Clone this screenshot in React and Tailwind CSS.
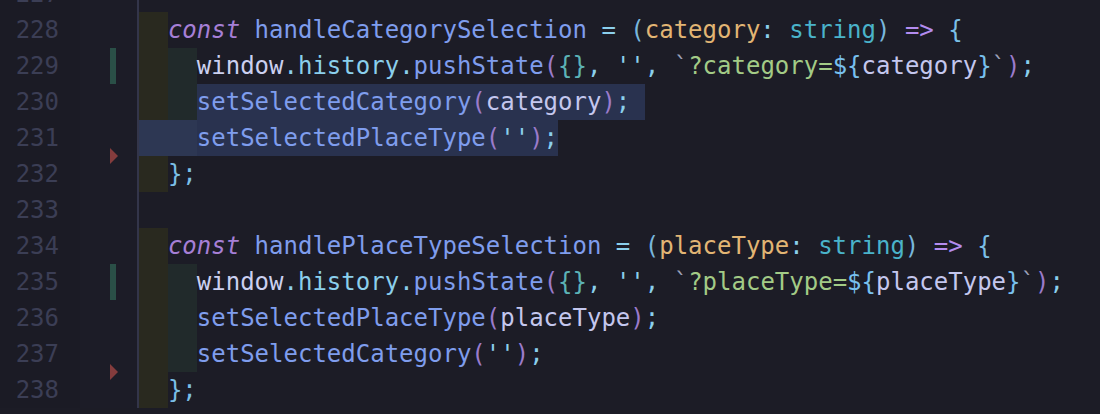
import React from 'react';

// token colour classes
const C = {
  kw: 'text-[#a67fd6] italic',
  fn: 'text-[#7f9ded]',
  tx: 'text-[#cbd0f0]',
  sky: 'text-[#8bcfec]',
  pp: 'text-[#78b6dc]',
  par: 'text-[#9b7bcb]',
  teal: 'text-[#5cb3b6]',
  str: 'text-[#a3cb86]',
  tick: 'text-[#9ba0b8]',
  interp: 'text-[#78c0ee]',
  v: 'text-[#c4c7ee]',
  param: 'text-[#e2b574]',
  type: 'text-[#4ab3ca]',
  arrow: 'text-[#b38cef]',
  brace: 'text-[#7bbfe6]',
};

const Y = 'bg-[#29291f]'; // first indent level
const G = 'bg-[#212a2b]'; // second indent level
const SEL = 'bg-[#29324f]';

const t = (cls, text) => ({ cls, text });

const header = (name, param) => [
  t(Y, '  '),
  t(C.kw, 'const'),
  t('', ' '),
  t(C.fn, name),
  t('', ' '),
  t(C.sky, '='),
  t('', ' '),
  t(C.pp, '('),
  t(C.param, param),
  t(C.sky, ':'),
  t('', ' '),
  t(C.type, 'string'),
  t(C.pp, ')'),
  t('', ' '),
  t(C.arrow, '=>'),
  t('', ' '),
  t(C.brace, '{'),
];

const push = (key) => [
  t(Y, '  '),
  t(G, '  '),
  t(C.tx, 'window'),
  t(C.sky, '.'),
  t(C.sky, 'history'),
  t(C.sky, '.'),
  t(C.fn, 'pushState'),
  t(C.par, '('),
  t(C.teal, '{}'),
  t(C.sky, ','),
  t('', ' '),
  t(C.sky, "''"),
  t(C.sky, ','),
  t('', ' '),
  t(C.tick, '`'),
  t(C.str, `?${key}=`),
  t(C.interp, '${'),
  t(C.v, key),
  t(C.interp, '}'),
  t(C.tick, '`'),
  t(C.par, ')'),
  t(C.sky, ';'),
];

const close = [t(Y, '  '), t(C.brace, '}'), t(C.brace, ';')];

const lines = [
  { n: 227, tokens: [] },
  { n: 228, tokens: header('handleCategorySelection', 'category') },
  { n: 229, tokens: push('category'), mark: 'add' },
  {
    n: 230,
    tokens: [
      t(Y, '  '),
      t(G, '  '),
      t(`${C.fn} ${SEL}`, 'setSelectedCategory'),
      t(`${C.par} ${SEL}`, '('),
      t(`${C.v} ${SEL}`, 'category'),
      t(`${C.par} ${SEL}`, ')'),
      t(`${C.sky} ${SEL}`, ';'),
      t(SEL, ' '),
    ],
  },
  {
    n: 231,
    tokens: [
      t('bg-[#2d3753]', '    '),
      t(`${C.fn} ${SEL}`, 'setSelectedPlaceType'),
      t(`${C.par} ${SEL}`, '('),
      t(`${C.sky} ${SEL}`, "''"),
      t(`${C.par} ${SEL}`, ')'),
      t(`${C.sky} ${SEL}`, ';'),
    ],
    mark: 'del',
  },
  { n: 232, tokens: close },
  { n: 233, tokens: [] },
  { n: 234, tokens: header('handlePlaceTypeSelection', 'placeType') },
  { n: 235, tokens: push('placeType'), mark: 'add' },
  {
    n: 236,
    tokens: [
      t(Y, '  '),
      t(G, '  '),
      t(C.fn, 'setSelectedPlaceType'),
      t(C.par, '('),
      t(C.v, 'placeType'),
      t(C.par, ')'),
      t(C.sky, ';'),
    ],
  },
  {
    n: 237,
    tokens: [
      t(Y, '  '),
      t(G, '  '),
      t(C.fn, 'setSelectedCategory'),
      t(C.par, '('),
      t(C.sky, "''"),
      t(C.par, ')'),
      t(C.sky, ';'),
    ],
    mark: 'del',
  },
  { n: 238, tokens: close },
];

const Line = ({ n, tokens, mark }) => (
  <div className="flex h-[36px] leading-[36px]">
    <div className="w-[80px] shrink-0 bg-[#1b1b25] pr-[21px] text-right text-[#3b3e55]">{n}</div>
    <div className="relative flex w-[57px] shrink-0 bg-[#1c1c27] pl-[30px]">
      {mark === 'add' && <div className="h-full w-[6px] bg-[#2a4f47]" />}
      {mark === 'del' && (
        <svg className="absolute bottom-[-8px] left-[30px] z-10" width="8" height="16" viewBox="0 0 8 16">
          <path d="M0 0 L8 8 L0 16 Z" fill="#843c3d" />
        </svg>
      )}
    </div>
    <div className="w-[2px] shrink-0 bg-[#33354a]" />
    <div className="flex flex-1 whitespace-pre">
      {tokens.map((tk, i) => (
        <span key={i} className={`h-[36px] ${tk.cls}`}>
          {tk.text}
        </span>
      ))}
    </div>
  </div>
);

export default function App() {
  return (
    <div className="h-[414px] w-[1100px] overflow-hidden bg-[#1c1c26] font-['DejaVu_Sans_Mono',monospace] text-[24px]">
      <div className="mt-[-24px]">
        {lines.map((l) => (
          <Line key={l.n} {...l} />
        ))}
      </div>
    </div>
  );
}
